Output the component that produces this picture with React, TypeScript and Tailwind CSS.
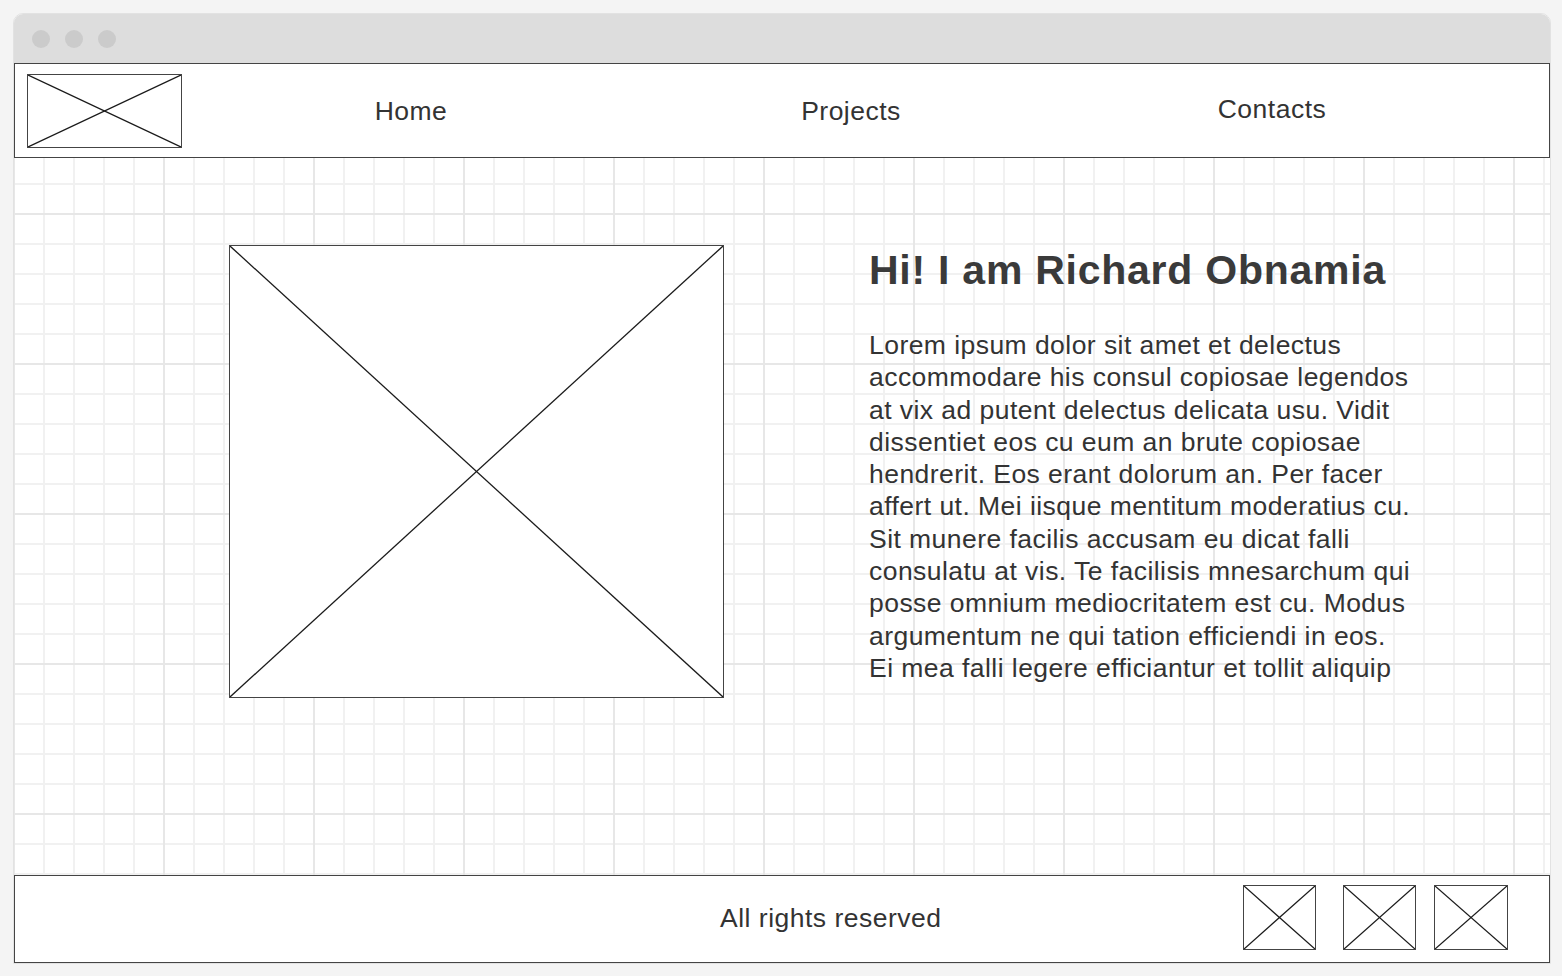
import React from 'react';

const XBox: React.FC<{ className?: string }> = ({ className }) => (
  <div className={`relative border border-[#444] bg-white ${className ?? ''}`}>
    <svg className="absolute inset-0 h-full w-full" viewBox="0 0 100 100" preserveAspectRatio="none">
      <line x1="0" y1="0" x2="100" y2="100" stroke="#1a1a1a" strokeWidth="1.3" vectorEffect="non-scaling-stroke" />
      <line x1="100" y1="0" x2="0" y2="100" stroke="#1a1a1a" strokeWidth="1.3" vectorEffect="non-scaling-stroke" />
    </svg>
  </div>
);

const paragraph = [
  'Lorem ipsum dolor sit amet et delectus',
  'accommodare his consul copiosae legendos',
  'at vix ad putent delectus delicata usu. Vidit',
  'dissentiet eos cu eum an brute copiosae',
  'hendrerit. Eos erant dolorum an. Per facer',
  'affert ut. Mei iisque mentitum moderatius cu.',
  'Sit munere facilis accusam eu dicat falli',
  'consulatu at vis. Te facilisis mnesarchum qui',
  'posse omnium mediocritatem est cu. Modus',
  'argumentum ne qui tation efficiendi in eos.',
  'Ei mea falli legere efficiantur et tollit aliquip',
];

export default function App() {
  return (
    <div className="h-[976px] w-[1562px] overflow-hidden bg-[#f4f4f4] pl-[13px] pt-[13px] font-['Liberation_Sans',Arial,sans-serif] text-[#333]">
      <div className="w-[1538px] overflow-hidden rounded-t-[10px] border border-[#e2e2e2] bg-white">
        {/* title bar */}
        <div className="flex h-[49px] items-center gap-[15px] bg-[#dddddd] pl-[18px]">
          <span className="h-[18px] w-[18px] rounded-full bg-[#cbcbcb]" />
          <span className="h-[18px] w-[18px] rounded-full bg-[#cbcbcb]" />
          <span className="h-[18px] w-[18px] rounded-full bg-[#cbcbcb]" />
        </div>

        {/* header */}
        <div className="flex h-[95px] items-center border border-[#444] bg-white pl-[12px] text-[26.5px] tracking-[0.5px]">
          <XBox className="h-[74px] w-[155px]" />
          <div className="ml-[129px] flex w-[200px] justify-center pt-[2px]">Home</div>
          <div className="ml-[240px] flex w-[200px] justify-center pt-[2px]">Projects</div>
          <div className="ml-[221px] flex w-[200px] justify-center pb-[2px]">Contacts</div>
        </div>

        {/* content */}
        <div className="flex h-[717px] bg-white pl-[215px] pt-[87px] [background-image:linear-gradient(to_right,#e7e7e7_2px,transparent_2px),linear-gradient(to_bottom,#e7e7e7_2px,transparent_2px),linear-gradient(to_right,#f1f1f1_2px,transparent_2px),linear-gradient(to_bottom,#f1f1f1_2px,transparent_2px)] [background-position:149px_55px,149px_55px,29px_25px,29px_25px] [background-size:150px_150px,150px_150px,30px_30px,30px_30px]">
          <XBox className="h-[453px] w-[495px] shrink-0" />
          <div className="ml-[145px]">
            <h1 className="pt-[2px] text-[41px] font-bold leading-[47px] tracking-[0.75px] text-[#3a3a3a]">
              Hi! I am Richard Obnamia
            </h1>
            <p className="mt-[35px] whitespace-nowrap text-[26.5px] leading-[32.3px] tracking-[0.45px]">
              {paragraph.map((line, i) => (
                <span key={i} className="block">
                  {line}
                </span>
              ))}
            </p>
          </div>
        </div>

        {/* footer */}
        <div className="flex h-[88px] items-start border border-[#444] bg-white">
          <span className="ml-[705px] mt-[23px] text-[26.5px] tracking-[0.5px]">All rights reserved</span>
          <XBox className="ml-auto mt-[9px] h-[65px] w-[73px]" />
          <XBox className="ml-[27px] mt-[9px] h-[65px] w-[73px]" />
          <XBox className="ml-[18px] mr-[41px] mt-[9px] h-[65px] w-[74px]" />
        </div>
      </div>
    </div>
  );
}
